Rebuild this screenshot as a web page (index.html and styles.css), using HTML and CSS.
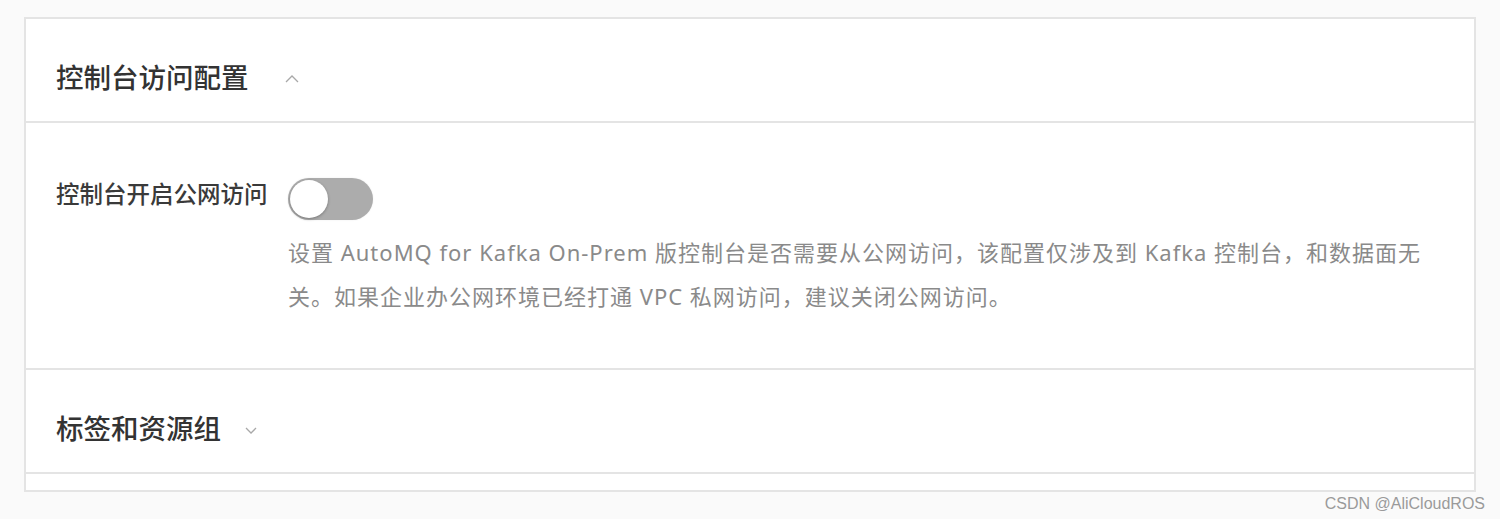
FILE: index.html
```html
<!DOCTYPE html>
<html lang="zh-CN">
<head>
  <meta charset="UTF-8" />
  <title>控制台访问配置</title>
  <meta name="viewport" content="width=device-width, initial-scale=1" />
  <link rel="stylesheet" href="styles.css">
</head>
<body>

  <div class="card">
    <div class="section-head">
      <h3>控制台访问配置</h3>
      <svg class="chevron up" width="14" height="8" viewBox="0 0 14 8"><path d="M1 7 L7 1 L13 7" fill="none" stroke="#a8a8a8" stroke-width="1.3"/></svg>
    </div>

    <div class="section-body">
      <div class="field">
        <div class="field-label">控制台开启公网访问</div>
        <div class="field-control">
          <span class="switch"><span class="knob"></span></span>
          <p class="help">设置 AutoMQ for Kafka On-Prem 版控制台是否需要从公网访问，该配置仅涉及到 Kafka 控制台，和数据面无关。如果企业办公网环境已经打通 VPC 私网访问，建议关闭公网访问。</p>
        </div>
      </div>
    </div>

    <div class="section-head">
      <h3>标签和资源组</h3>
      <svg class="chevron down" width="12" height="7" viewBox="0 0 12 7"><path d="M1 1 L6 6 L11 1" fill="none" stroke="#a8a8a8" stroke-width="1.3"/></svg>
    </div>

    <div class="section-rest"></div>
  </div>

  <div class="watermark">CSDN @AliCloudROS</div>

</body>
</html>
```

FILE: styles.css
```css
:root {
  --border: #e4e4e4;
  --title: #333;
  --text: #3a3a3a;
  --muted: #8a8a8a;
  --bg: #fafafa;
}
* {
  margin: 0;
  padding: 0;
  box-sizing: border-box;
}
body {
  font-family: "Noto Sans", "Noto Sans CJK SC", sans-serif;
  background: var(--bg);
  color: var(--text);
  padding: 17px 24px 0;
}
.card {
  background: white;
  border: 2px solid var(--border);
}
.section-head {
  display: flex;
  align-items: center;
  height: 104px;
  padding: 16px 0 0 30px;
  border-bottom: 2px solid var(--border);
}
.section-head h3 {
  font-size: 27.5px;
  font-weight: 500;
  color: var(--title);
  line-height: 36px;
}
.chevron.up {
  margin-left: 36px;
  margin-top: 2px;
}
.chevron.down {
  margin-left: 24px;
  margin-top: 2px;
}
.section-body {
  padding: 54px 36px 50px 30px;
  border-bottom: 2px solid var(--border);
}
.field {
  display: flex;
}
.field-label {
  width: 232px;
  flex-shrink: 0;
  font-size: 23.5px;
  font-weight: 500;
  color: var(--text);
  line-height: 34px;
}
.field-control {
  flex: 1;
}
.switch {
  display: block;
  width: 85px;
  height: 42px;
  border-radius: 21px;
  background: #acacac;
  padding: 2px;
  margin-top: 1px;
  box-shadow: 0 0 2px rgba(0,0,0,0.08);
}
.knob {
  display: block;
  width: 38px;
  height: 38px;
  border-radius: 50%;
  background: white;
  box-shadow: 0 1px 3px rgba(0,0,0,0.3);
}
.help {
  margin-top: 10px;
  font-size: 22px;
  letter-spacing: 1px;
  line-height: 44px;
  color: var(--muted);
}
.section-rest {
  height: 16px;
}
.watermark {
  font-family: "Liberation Sans", Arial, sans-serif;
  font-size: 16px;
  color: #9a9a9a;
  text-align: right;
  margin-right: -9px;
  padding-top: 3px;
}
```
